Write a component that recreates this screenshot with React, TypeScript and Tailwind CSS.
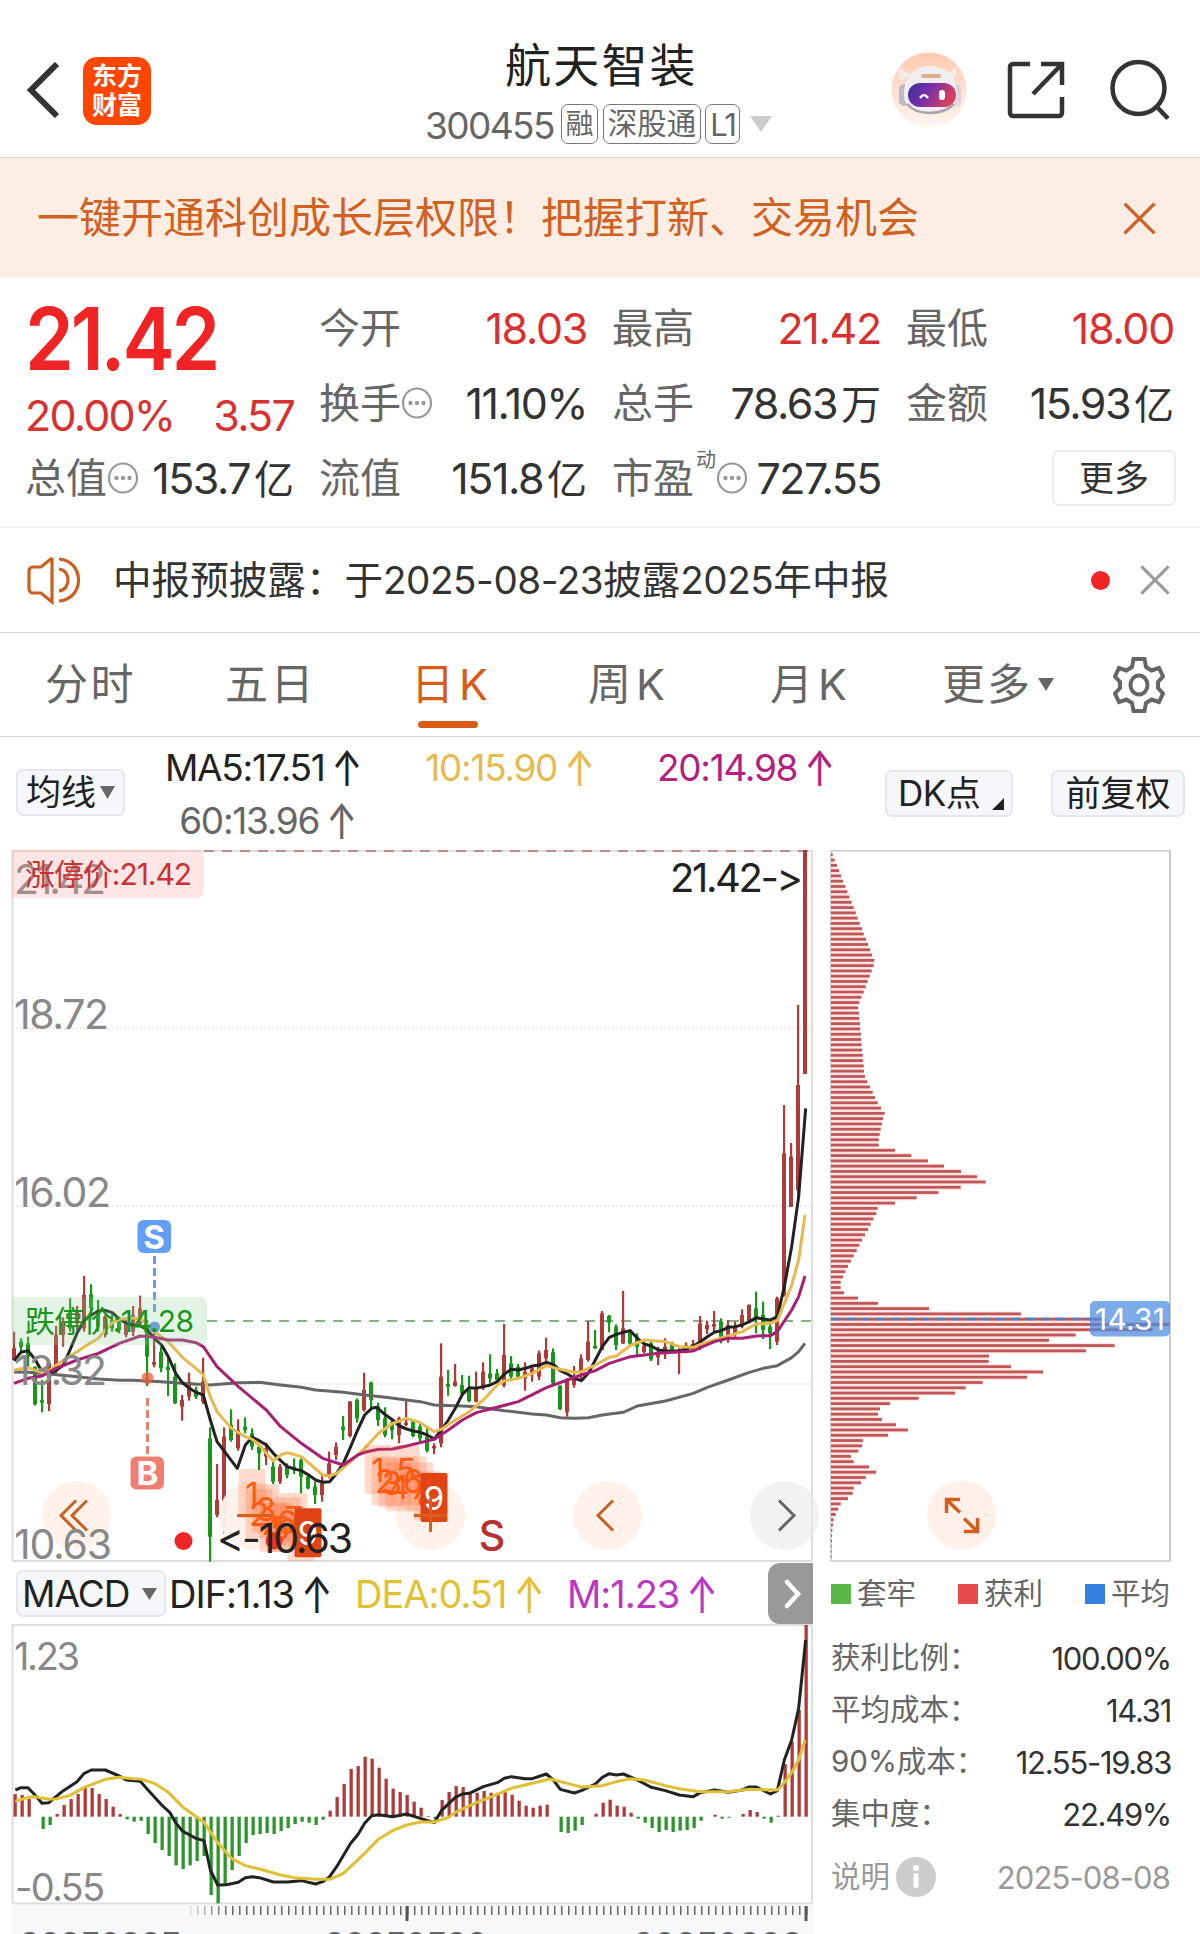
import { ReactNode } from 'react'

// [high, low, bodyTop, bodyBottom, up] in chart units (3 units = 1px)
type Candle = [number, number, number, number, 0 | 1]

const candles: Candle[] = [
  [395, 480, 445, 480, 1], [415, 455, 425, 440, 0], [410, 500, 430, 470, 0], [500, 617, 500, 612, 0],
  [540, 637, 600, 608, 0], [487, 633, 490, 612, 1], [378, 520, 405, 510, 1], [352, 440, 365, 405, 1],
  [295, 395, 330, 385, 0], [318, 400, 330, 370, 1], [228, 395, 285, 385, 1], [253, 345, 283, 325, 0],
  [300, 395, 330, 380, 0], [345, 412, 350, 395, 1], [340, 395, 360, 385, 0], [350, 400, 365, 390, 0],
  [360, 412, 370, 405, 1], [318, 408, 345, 395, 1], [287, 380, 325, 370, 1], [360, 558, 385, 470, 0],
  [400, 502, 486, 494, 1], [440, 517, 455, 505, 0], [470, 588, 500, 510, 0], [490, 612, 530, 610, 0],
  [585, 662, 600, 620, 1], [518, 602, 545, 590, 1], [560, 597, 570, 590, 0], [473, 612, 545, 605, 1],
  [682, 1085, 715, 1010, 0], [792, 952, 900, 945, 1], [682, 1000, 710, 925, 1], [628, 725, 675, 720, 0],
  [658, 752, 690, 745, 1], [652, 700, 680, 690, 0], [685, 750, 700, 740, 0], [730, 810, 740, 760, 0],
  [728, 795, 745, 770, 1], [780, 852, 800, 845, 0], [792, 852, 800, 845, 1], [790, 835, 800, 825, 0],
  [775, 822, 800, 808, 0], [775, 880, 780, 830, 0], [820, 868, 830, 865, 0], [845, 912, 860, 885, 0],
  [820, 905, 850, 885, 1], [755, 835, 790, 830, 1], [727, 780, 740, 765, 1], [648, 720, 680, 690, 0],
  [603, 712, 605, 708, 1], [595, 668, 600, 655, 0], [518, 635, 570, 630, 1], [545, 625, 548, 600, 0],
  [608, 678, 620, 660, 0], [622, 712, 655, 705, 0], [655, 718, 665, 690, 0], [650, 730, 655, 705, 1],
  [600, 678, 668, 675, 1], [660, 712, 665, 708, 0], [668, 730, 680, 715, 0], [680, 757, 710, 752, 0],
  [730, 762, 738, 745, 1], [430, 742, 530, 730, 1], [510, 587, 552, 560, 0], [492, 560, 545, 558, 1],
  [525, 590, 555, 580, 0], [527, 607, 570, 603, 0], [515, 607, 565, 605, 1], [487, 570, 515, 565, 1],
  [463, 550, 520, 535, 0], [507, 545, 520, 540, 0], [372, 562, 465, 555, 1], [468, 540, 490, 530, 0],
  [492, 535, 500, 530, 0], [487, 572, 515, 535, 1], [497, 545, 505, 520, 1], [452, 540, 460, 530, 1],
  [413, 495, 450, 475, 1], [445, 552, 457, 550, 0], [555, 630, 557, 627, 0], [535, 650, 540, 637, 1],
  [498, 563, 530, 555, 1], [463, 540, 475, 515, 1], [363, 485, 425, 480, 1], [390, 447, 438, 445, 0],
  [333, 450, 340, 450, 1], [345, 397, 348, 368, 0], [373, 450, 380, 435, 0], [273, 432, 385, 430, 1],
  [388, 435, 395, 430, 0], [400, 465, 410, 440, 0], [435, 460, 438, 456, 1], [425, 483, 430, 478, 0],
  [440, 495, 455, 472, 1], [415, 477, 440, 460, 1], [425, 450, 435, 448, 0], [445, 522, 450, 458, 1],
  [427, 460, 435, 455, 1], [420, 455, 432, 450, 1], [348, 450, 370, 445, 1], [362, 402, 375, 388, 1],
  [333, 395, 372, 380, 1], [355, 430, 365, 410, 0], [360, 428, 375, 410, 1], [365, 410, 380, 405, 1],
  [328, 385, 345, 380, 1], [313, 370, 315, 360, 1], [275, 400, 325, 355, 0], [305, 417, 345, 390, 0],
  [370, 447, 380, 400, 0], [290, 435, 295, 425, 1], [-285, 290, -140, 285, 1], [-171, 21, -130, 21, 1],
  [-585, 0, -345, -30, 1], [-1050, -378, -1050, -378, 1],
]

const ma5 =
  '42,482 63,457 84,452 105,478 126,515 147,520 168,512 190,495 210,450 231,400 253,360 274,345 295,333 316,331 337,338 358,357 379,370 400,375 421,377 442,390 463,415 485,435 505,470 527,520 547,548 568,565 588,577 610,585 631,660 651,725 674,755 694,782 712,805 736,735 757,712 778,722 799,735 820,760 842,782 862,800 883,807 904,812 926,825 947,840 968,847 989,845 1010,820 1030,790 1052,740 1073,690 1094,645 1115,625 1130,622 1157,645 1178,660 1199,678 1220,687 1240,693 1261,697 1282,705 1303,717 1324,690 1345,660 1366,625 1387,583 1408,563 1429,565 1450,560 1471,555 1492,545 1513,522 1534,508 1555,510 1576,505 1597,498 1618,495 1639,487 1660,493 1681,512 1702,522 1723,535 1744,542 1765,520 1786,480 1807,440 1828,412 1849,403 1870,397 1891,392 1912,415 1933,432 1954,438 1975,450 1996,452 2017,453 2038,452 2059,447 2080,438 2101,425 2122,410 2143,397 2164,392 2185,382 2206,380 2227,375 2248,365 2269,353 2290,357 2311,360 2332,350 2353,260 2375,140 2396,-10 2417,-275'
const ma10 =
  '42,510 84,503 126,518 147,512 190,480 231,455 253,440 295,415 316,390 337,368 358,358 400,354 421,357 442,372 463,395 505,425 547,472 588,505 610,525 631,590 651,635 694,685 736,710 757,718 778,735 799,760 820,783 842,765 862,758 904,770 947,807 968,825 989,828 1010,820 1052,785 1094,745 1136,700 1178,670 1220,655 1261,668 1303,695 1324,688 1366,660 1408,635 1450,600 1492,555 1513,543 1555,535 1597,520 1639,497 1681,508 1723,517 1744,515 1786,495 1828,472 1849,468 1891,437 1933,420 1996,425 2038,440 2080,442 2101,433 2143,420 2185,408 2227,395 2269,372 2311,370 2332,362 2353,310 2375,255 2396,180 2415,45'
const ma20 =
  '42,550 84,535 126,528 168,505 231,480 295,460 358,430 421,408 463,412 505,420 547,420 588,428 610,440 651,500 715,560 799,630 842,680 904,730 968,775 1030,795 1073,765 1094,757 1136,748 1178,747 1220,738 1261,728 1303,718 1345,690 1387,660 1429,638 1471,627 1555,605 1639,563 1702,540 1744,525 1786,512 1828,490 1891,470 1975,460 2080,453 2101,443 2143,425 2185,415 2227,415 2269,408 2311,407 2332,395 2375,330 2396,290 2415,228'
const ma60 =
  '42,516 84,517 147,522 210,528 295,537 358,541 400,541 485,545 547,550 631,555 715,548 778,547 842,555 904,562 947,570 1030,577 1094,585 1157,592 1220,600 1261,605 1303,615 1387,618 1429,620 1513,632 1597,642 1639,645 1681,653 1723,655 1765,653 1807,645 1870,637 1912,618 1996,603 2080,580 2122,562 2185,540 2248,517 2290,505 2332,497 2375,473 2396,455 2415,430'

const macdBars = [
  68, 65, 53, 0, -37, -25, 8, 35, 53, 68, 88, 86, 68, 53, 30, 8, -8, -15, -12, -52, -79, -100, -118, -146, -157, -146,
  -133, -118, -235, -260, -203, -160, -118, -79, -55, -52, -49, -52, -43, -34, -22, -15, -18, -25, -9, 18, 59, 98, 143,
  152, 180, 174, 147, 114, 84, 74, 65, 45, 27, 2, -6, 50, 74, 92, 89, 72, 72, 77, 72, 72, 75, 66, 48, 33, 27, 33, 36, 0,
  -46, -49, -42, -25, 0, 9, 42, 51, 33, 30, 12, -6, -18, -34, -46, -40, -46, -42, -40, -34, -12, 0, 6, -6, -3, 0, 8, 20,
  14, -6, -18, 3, 158, 225, 320, 575,
]
const dif =
  '46,540 63,533 84,533 105,555 126,580 147,578 168,560 190,542 231,515 253,490 274,480 316,480 358,498 379,510 421,514 442,538 485,585 510,608 527,638 547,663 588,685 612,692 631,780 653,825 680,824 715,817 736,803 757,800 778,803 820,816 862,816 904,812 947,822 968,815 989,800 1010,770 1052,700 1073,675 1094,640 1115,617 1136,614 1178,620 1220,612 1261,625 1303,638 1324,602 1366,562 1387,552 1408,550 1450,530 1492,518 1513,505 1534,500 1576,506 1597,506 1639,492 1660,510 1681,538 1723,549 1744,542 1786,522 1807,502 1828,491 1849,495 1870,492 1912,510 1954,532 1996,542 2038,555 2080,560 2101,548 2143,540 2185,547 2227,540 2248,531 2269,531 2311,552 2332,542 2353,450 2375,390 2396,295 2417,90'
const dea =
  '46,574 84,562 105,560 147,568 168,567 210,556 253,532 316,508 358,502 400,506 421,507 463,520 505,547 547,590 612,637 651,695 694,745 736,767 778,777 842,795 883,803 947,808 989,808 1030,790 1094,730 1136,687 1178,662 1220,645 1261,636 1303,636 1345,623 1366,607 1429,578 1492,553 1534,535 1597,520 1650,507 1702,520 1744,531 1807,527 1849,515 1891,506 1933,510 1996,527 2038,536 2101,545 2185,545 2248,538 2332,540 2353,518 2375,488 2396,450 2415,390'

const chips = [
  5, 11, 18, 24, 30, 36, 43, 49, 55, 62, 68, 74, 80, 86, 93, 98, 105, 111, 117, 123, 130, 128, 122, 116, 110, 104, 98, 91,
  85, 81, 84, 85, 87, 88, 90, 91, 92, 93, 95, 96, 98, 99, 102, 109, 117, 125, 132, 140, 150, 161, 156, 153, 149, 146, 143,
  143, 192, 241, 291, 339, 390, 438, 464, 389, 322, 257, 192, 140, 136, 127, 119, 111, 102, 93, 85, 77, 68, 60, 51, 43,
  36, 29, 29, 39, 81, 141, 294, 570, 824, 1017, 965, 734, 654, 851, 765, 474, 473, 540, 636, 588, 455, 404, 372, 263, 177,
  147, 141, 153, 195, 231, 171, 96, 93, 82, 60, 68, 114, 135, 104, 90, 68, 65, 51, 29, 21, 14, 8, 6, 4, 3, 3, 2, 2, 2,
]

const RED = '#b03a38'
const GREEN = '#179617'

// nine-turn marks hang below a run of nine candles
const turns = [34, 52].flatMap((start) =>
  Array.from({ length: 9 }, (_, i) => ({ n: i + 1, x: 14 + 7 * (start + i), y: candles[start + i][1] / 3 + 368 })),
)

function More() {
  return (
    <svg width="32" height="34" viewBox="0 0 32 34" className="shrink-0">
      <ellipse cx="16" cy="16" rx="14" ry="14.500" fill="none" stroke="#999" strokeWidth="2.200" />
      <circle cx="9.500" cy="16" r="2.200" fill="#999" />
      <circle cx="16" cy="16" r="2.200" fill="#999" />
      <circle cx="22.500" cy="16" r="2.200" fill="#999" />
    </svg>
  )
}

function Down({ w, h, color }: { w: number; h: number; color: string }) {
  return (
    <svg width={w} height={h} viewBox="0 0 10 10" preserveAspectRatio="none" className="shrink-0">
      <path d="M0 0h10L5 10z" fill={color} />
    </svg>
  )
}

function Up() {
  return <span className="ml-[7px] inline-block scale-y-[1.35] tracking-normal">↑</span>
}

function Cross({ size, color }: { size: number; color: string }) {
  return (
    <svg width={size} height={size} viewBox="0 0 32 32">
      <path d="M1.5 1.5l29 29M30.5 1.5l-29 29" stroke={color} strokeWidth="3.2" />
    </svg>
  )
}

function Header() {
  return (
    <header className="flex h-[158px] items-start border-b border-[#d5d5d5] pl-[27px]">
      <svg width="33" height="56" viewBox="0 0 33 56" className="mt-[62px]">
        <path d="M30 2L4 28l26 26" fill="none" stroke="#333" strokeWidth="6" />
      </svg>
      <div className="mt-[57px] ml-[23px] flex h-[68px] w-[68px] flex-col items-center justify-center rounded-[14px] bg-[#ff4600] text-[25px] leading-[29px] font-bold text-white">
        <span>东方</span>
        <span>财富</span>
      </div>
      <div className="ml-[274px] flex w-[348px] flex-col">
        <h1 className="mt-[35px] ml-[80px] text-[46px] leading-[60px] tracking-[2.2px] text-[#222]">航天智装</h1>
        <div className="mt-[9px] flex h-[40px] items-center text-[#666]">
          <span className="mt-[2px] w-[136px] text-[37px] tracking-[-1.6px]">300455</span>
          <span className="flex h-[40px] w-[37px] items-center justify-center rounded-[7px] border border-[#777] text-[28px]">
            融
          </span>
          <span className="ml-[5px] flex h-[40px] w-[98px] items-center justify-center rounded-[7px] border border-[#777] text-[29.5px]">
            深股通
          </span>
          <span className="mr-[10px] ml-[4px] flex h-[40px] w-[35px] items-center justify-center rounded-[7px] border border-[#777] text-[31px] tracking-[-2px]">
            L1
          </span>
          <Down w={22} h={16} color="#ccc" />
        </div>
      </div>
      <svg width="76" height="76" viewBox="0 0 76 76" className="mt-[52px] ml-[118px]">
        <defs>
          <linearGradient id="halo" x1="0" y1="0" x2="0" y2="1">
            <stop offset="0" stopColor="#ffc9ad" />
            <stop offset="1" stopColor="#fff6f2" />
          </linearGradient>
          <linearGradient id="visor" x1="0" y1="0" x2="1" y2="0.3">
            <stop offset="0" stopColor="#3a2f9c" />
            <stop offset="0.5" stopColor="#7a2fa8" />
            <stop offset="1" stopColor="#d8405c" />
          </linearGradient>
        </defs>
        <circle cx="38" cy="38" r="37.5" fill="url(#halo)" />
        <path d="M10 29q-5-7 0-14 3 6 10 7zM62 27q6-5 2-12-3 6-10 7z" fill="#f3ecec" />
        <rect x="8" y="32" width="10" height="22" rx="5" fill="#c0bac6" />
        <rect x="60" y="32" width="10" height="22" rx="5" fill="#dcd2d8" />
        <path d="M13 42c0-17 9-28 26-28s27 11 27 28c0 13-10 19-27 19S13 55 13 42z" fill="#f1eef2" />
        <path d="M16 52c6 7 15 9 23 9s17-2 24-9" fill="none" stroke="#a9a3b2" strokeWidth="2.500" />
        <rect x="30" y="22" width="20" height="4" rx="2" fill="#d9b08a" />
        <rect x="17" y="31" width="48" height="24" rx="12" fill="url(#visor)" />
        <path d="M29 46q4-6 8 0" fill="none" stroke="#fff" strokeWidth="2.4" />
        <rect x="48" y="38" width="6" height="10" rx="3" fill="#fff" />
      </svg>
      <svg width="60" height="60" viewBox="0 0 60 60" fill="none" stroke="#333" strokeWidth="4.5" className="mt-[60px] ml-[39px]">
        <path d="M24 4H7a3 3 0 0 0-3 3v46a3 3 0 0 0 3 3h46a3 3 0 0 0 3-3V37M35 4h21v21M56 4L27 34" />
      </svg>
      <svg width="62" height="62" viewBox="0 0 62 62" fill="none" stroke="#333" strokeWidth="4.5" className="mt-[59px] ml-[43px]">
        <circle cx="29.5" cy="29" r="26" />
        <path d="M47 47l12 12.500" />
      </svg>
    </header>
  )
}

function Stat({ label, value, red, extra }: { label: string; value: ReactNode; red?: boolean; extra?: ReactNode }) {
  return (
    <div className="flex h-[75px] items-center justify-between">
      <span className="flex items-center text-[41px] whitespace-nowrap text-[#666]">
        {label}
        {extra}
      </span>
      <span
        className={
          red
            ? 'text-[43px] tracking-[-1.3px] whitespace-nowrap text-[#d93030]'
            : 'text-[43px] tracking-[-1.5px] whitespace-nowrap text-[#333]'
        }
      >
        {value}
      </span>
    </div>
  )
}

function Unit({ children }: { children: ReactNode }) {
  return <span className="ml-[4px] text-[40px] tracking-normal">{children}</span>
}

function Quote() {
  return (
    <section className="grid h-[250px] grid-cols-[269px_268px_269px_268px] gap-x-[25px] border-b border-[#ececec] pt-[13px] pl-[25px]">
      <div>
        <div className="h-[96px] origin-left scale-x-[0.9] text-[87px] leading-[96px] font-semibold tracking-[-3.5px] text-[#f02424]">
          21.42
        </div>
        <div className="flex h-[54px] items-center justify-between pt-[2px] text-[43px] tracking-[-1.8px] text-[#d93030]">
          <span>20.00%</span>
          <span>3.57</span>
        </div>
        <Stat label="总值" extra={<More />} value={<>153.7<Unit>亿</Unit></>} />
      </div>
      <div>
        <Stat label="今开" value="18.03" red />
        <Stat label="换手" extra={<More />} value="11.10%" />
        <Stat label="流值" value={<>151.8<Unit>亿</Unit></>} />
      </div>
      <div>
        <Stat label="最高" value="21.42" red />
        <Stat label="总手" value={<>78.63<Unit>万</Unit></>} />
        <Stat
          label="市盈"
          extra={
            <>
              <span className="-mt-[38px] ml-[2px] text-[20px]">动</span>
              <More />
            </>
          }
          value="727.55"
        />
      </div>
      <div>
        <Stat label="最低" value="18.00" red />
        <Stat label="金额" value={<>15.93<Unit>亿</Unit></>} />
        <div className="-mr-[2px] flex h-[73px] items-center justify-end">
          <button className="h-[56px] w-[124px] rounded-[7px] border-2 border-[#ebebeb] text-[35px] leading-[50px] text-[#333]">
            更多
          </button>
        </div>
      </div>
    </section>
  )
}

function Notice() {
  return (
    <section className="flex h-[105px] items-center border-b border-[#d9d9d9] pr-[30px] pl-[27px]">
      <svg width="53" height="50" viewBox="0 0 53 50" fill="none" stroke="#cc6020" strokeWidth="3.2">
        <path d="M25 3v44l-11-9H6a4 4 0 0 1-4-4V16a4 4 0 0 1 4-4h8L25 3M32 4c26 2 26 40 0 42M32 14c12 1 12 21 0 22" />
      </svg>
      <p className="ml-[33px] text-[38.600px] whitespace-nowrap text-[#333]">
        中报预披露：于<span className="tracking-[-0.450px]">2025-08-23</span>披露
        <span className="tracking-[-0.450px]">2025</span>年中报
      </p>
      <span className="mr-[30px] ml-auto h-[19px] w-[19px] rounded-full bg-[#f02424]" />
      <Cross size={30} color="#999" />
    </section>
  )
}

function Tabs() {
  return (
    <nav className="flex h-[104px] items-center border-b border-[#d5d5d5] pl-[45px] text-[43px] whitespace-nowrap text-[#666]">
      <span className="w-[180px] tracking-[2.500px]">分时</span>
      <span className="w-[186px] tracking-[2.500px]">五日</span>
      <span className="relative w-[177px] text-[#d85c16]">
        日<span className="ml-[5px]">K</span>
        <i className="absolute top-[58px] left-[7px] h-[7px] w-[60px] rounded-full bg-[#d85c16]" />
      </span>
      <span className="w-[182px]">
        周<span className="ml-[5px]">K</span>
      </span>
      <span className="w-[172px]">
        月<span className="ml-[5px]">K</span>
      </span>
      <span className="flex w-[171px] items-center gap-[6px] tracking-[2px]">
        更多
        <Down w={16} h={13} color="#666" />
      </span>
      <svg width="52" height="58" viewBox="0 0 52 58" fill="none" stroke="#666" strokeWidth="4">
        <path d="M20.500 3h11l1.500 8 5.500 3.500 7.500-2.500 4 8.500-5 5.500v6l5 5.500-4 8.500-7.500-2.500L33 47l-1.500 8h-11L19 47l-5.500-3.500L6 46l-4-8.500L7 32v-6l-5-5.500L6 12l7.500 2.500L19 11z" />
        <ellipse cx="26" cy="29" rx="8.500" ry="9.500" />
      </svg>
    </nav>
  )
}

function Averages() {
  return (
    <section className="flex h-[113px] items-start pl-[16px] whitespace-nowrap text-[#222]">
      <button className="mt-[32px] flex h-[47px] w-[109px] items-center gap-[4px] rounded-[7px] border-2 border-[#e4e7eb] bg-[#f6f7fa] pl-[8px] text-[35px]">
        均线
        <Down w={15} h={13} color="#666" />
      </button>
      <div className="ml-[40px] grid w-[720px] grid-cols-[192px_238px_240px] pt-[4px] text-right text-[37px] leading-[53px] tracking-[-1.300px]">
        <span>MA5:17.51<Up /></span>
        <span className="text-[#e8b94e]">10:15.90<Up /></span>
        <span className="text-[#b5207e]">20:14.98<Up /></span>
        <span className="text-[#666]">60:13.96<Up /></span>
      </div>
      <button className="mt-[33px] flex h-[47px] w-[128px] items-end rounded-[7px] border-2 border-[#e4e7eb] bg-[#f6f7fa] pl-[11px] text-[35px] leading-[43px]">
        <span className="tracking-[-0.500px]">DK点</span>
        <svg width="12" height="12" className="mb-[5px] ml-[12px]">
          <path d="M12 0v12H0z" fill="#222" />
        </svg>
      </button>
      <button className="mt-[33px] ml-[38px] h-[47px] w-[134px] rounded-[7px] border-2 border-[#e4e7eb] bg-[#f6f7fa] text-[35px] leading-[43px]">
        前复权
      </button>
    </section>
  )
}

function KChart() {
  return (
    <div className="relative h-[713px] w-[813px]">
      <svg width="820" height="713" viewBox="0 0 820 713" className="absolute top-0 left-0">
        <path d="M12.500 0v711M812 0v711M12 711h800" stroke="#ddd" strokeWidth="2" fill="none" />
        <path d="M12 .8h800" stroke="#ddd" strokeWidth="2" />
        <path d="M12 178.500h800M12 356h800M12 534h800" stroke="#e2e2e2" strokeWidth="1.500" strokeDasharray="2 2" />
        <path d="M204 1h608" stroke="#b87070" strokeWidth="1.500" strokeDasharray="10 8" />
        <path d="M207 471h605" stroke="#7fb77f" strokeWidth="2" strokeDasharray="10 8" />

        {candles.map(([high, low, top, bottom, up], i) => (
          <g key={i} fill={up ? RED : GREEN}>
            <rect x={13 + 7 * i} y={high / 3 + 350} width="2.200" height={(low - high) / 3} />
            <rect x={12 + 7 * i} y={top / 3 + 350} width="4" height={(bottom - top) / 3} />
          </g>
        ))}

        <g transform="translate(0 350) scale(.33333)" fill="none" strokeWidth="9" strokeLinejoin="round">
          <polyline points={ma60} stroke="#666" />
          <polyline points={ma5} stroke="#222" />
          <polyline points={ma10} stroke="#e8b94e" />
          <polyline points={ma20} stroke="#a81f74" />
        </g>

        <path d="M154.500 406v58" stroke="#6a9cdc" strokeWidth="3" strokeDasharray="8 4" />
        <circle cx="154.500" cy="477" r="5.500" fill="#3f80d8" fillOpacity=".85" />
        <rect x="137.500" y="370" width="33.500" height="33" rx="6" fill="#619ff5" />
        <path d="M147.500 548v56" stroke="#e08272" strokeWidth="3" strokeDasharray="8 4" />
        <circle cx="147.500" cy="528" r="6" fill="#f05a3c" fillOpacity=".75" />
        <rect x="130.500" y="606.500" width="33.500" height="33" rx="6" fill="#f07f70" />
        <g fill="#fff" fontSize="33" fontWeight="700" textAnchor="middle">
          <text x="154" y="398.500">S</text>
          <text x="147.500" y="635">B</text>
        </g>

        <g fontSize="41" fill="#888">
          <text x="14" y="43.500" textLength="92">21.42</text>
          <text x="14" y="179" textLength="95">18.72</text>
          <text x="14" y="357" textLength="97">16.02</text>
          <text x="14" y="535" textLength="93">13.32</text>
        </g>
        <path d="M12 0h185a7 7 0 0 1 7 7v34a7 7 0 0 1-7 7H12z" fill="#ff9c9c" fillOpacity=".25" />
        <text x="25" y="35" fontSize="30" fill="#cc3030" textLength="167">
          涨停价:21.42
        </text>
        <path d="M12 447h188a7 7 0 0 1 7 7v34a7 7 0 0 1-7 7H12z" fill="#8fd49a" fillOpacity=".25" />
        <text x="25" y="482" fontSize="30" fill="#179617" textLength="169">
          跌停价:14.28
        </text>
        <text x="670" y="41.500" fontSize="40" fill="#222" textLength="133">
          21.42-&gt;
        </text>
      </svg>

      <svg width="830" height="713" viewBox="0 0 830 713" className="absolute top-0 left-0" fill="none">
        {[76.500, 253.500, 430.500, 607.500].map((cx) => (
          <circle key={cx} cx={cx} cy="665.500" r="34.500" fill="#fff1ea" fillOpacity=".95" />
        ))}
        <circle cx="784.500" cy="665.500" r="34.500" fill="#e8e8e8" fillOpacity=".55" />
        <g stroke="#cc6020" strokeWidth="3">
          <path d="M76 650.500L61 665.500l15 15M87 650.500L72 665.500l15 15" />
          <path d="M613 650.500l-15 15 15 15" />
        </g>
        <path d="M779 650.500l15 15-15 15" stroke="#666" strokeWidth="3" />
        <text x="14" y="708.500" fontSize="41" fill="#888" textLength="98">
          10.63
        </text>
        {turns.map(({ n, x, y }) => (
          <g key={`${n}-${x}`}>
            <rect x={x - 13.500} y={y + 1} width="27" height="49" rx="2" fill={n === 9 ? '#e04414' : '#ff5a20'} fillOpacity={n === 9 ? 1 : 0.22} />
            <text x={x} y={y + 38} fontSize="33" textAnchor="middle" fill={n === 9 ? '#fff' : '#ff5a0a'}>
              {n}
            </text>
          </g>
        ))}
        <path d="M237 665.500h34M414 665.500h33M430.500 648v34" stroke="#d8601a" strokeWidth="3" />
        <circle cx="274" cy="691" r="8.500" fill="#f03020" />
        <circle cx="183.500" cy="691" r="9" fill="#f02424" />
        <text x="217" y="702.500" fontSize="41" fill="#222" textLength="136">
          &lt;-10.63
        </text>
        <text x="492" y="699.500" fontSize="41" fontWeight="500" fill="#b83030" textAnchor="middle">
          S
        </text>
      </svg>
    </div>
  )
}

function MacdBar() {
  return (
    <div className="flex h-[61px] items-center pl-[16px] text-[38px] tracking-[-1px] whitespace-nowrap text-[#222]">
      <button className="flex h-[47px] w-[150px] items-center justify-between rounded-[7px] border-2 border-[#e4e7eb] bg-[#f6f7fa] pr-[7px] pl-[4px] text-[37px]">
        MACD
        <Down w={15} h={12} color="#666" />
      </button>
      <span className="ml-[3px] w-[186px]">DIF:1.13<Up /></span>
      <span className="w-[212px] text-[#e3c030]">DEA:0.51<Up /></span>
      <span className="w-[201px] text-[#bd36c4]">M:1.23<Up /></span>
      <span className="flex h-[61px] w-[45px] items-center justify-center rounded-l-[12px] bg-[#999]">
        <svg width="18" height="30" viewBox="0 0 18 30" className="ml-[4px]">
          <path d="M3 3l11 12L3 27" fill="none" stroke="#fff" strokeWidth="4.500" strokeLinecap="round" />
        </svg>
      </span>
    </div>
  )
}

function MacdChart() {
  return (
    <svg width="820" height="281" viewBox="0 0 820 281" className="block">
      <path d="M12.500 1v278M812 1v278M12 1h800M12 279.500h800" stroke="#ddd" strokeWidth="2" />
      <g fontSize="38" fill="#888">
        <text x="14" y="45.500" textLength="66">1.23</text>
        <text x="15" y="276.500" textLength="90">-0.55</text>
      </g>
      {macdBars.map((v, i) => (
        <rect
          key={i}
          x={13.500 + 7 * i}
          y={v > 0 ? 192.700 - v / 3 : 192.700}
          width="3.300"
          height={Math.abs(v) / 3}
          fill={v > 0 ? RED : '#2c962c'}
        />
      ))}
      <g transform="translate(0 -14) scale(.33333)" fill="none" strokeWidth="9" strokeLinejoin="round">
        <polyline points={dif} stroke="#222" />
        <polyline points={dea} stroke="#e0bf35" />
      </g>
    </svg>
  )
}

function Ruler() {
  return (
    <svg width="820" height="29" viewBox="0 0 820 29" className="block">
      <rect x="12" width="801" height="29" fill="#f7f8fa" />
      {Array.from({ length: 89 }, (_, i) => (
        <rect key={i} x={190 + 7 * i} y="1" width="1.500" height="9" fill="#666" fillOpacity={Math.min(1, 0.2 + i * 0.15)} />
      ))}
      <path d="M407 1v15M806 1v15" stroke="#555" strokeWidth="3" />
      <g fontSize="38" fill="#666">
        <text x="18" y="54.500" textLength="164">20250225</text>
        <text x="323" y="54.500" textLength="166">20250520</text>
        <text x="632" y="54.500" textLength="172">20250808</text>
      </g>
    </svg>
  )
}

function ChipChart() {
  return (
    <svg width="342" height="713" viewBox="0 0 342 713" className="block">
      <path d="M1 .8h340M1 711h340" stroke="#ccc" strokeWidth="1.500" />
      <path d="M1 0v711M340 0v711" stroke="#ccc" strokeWidth="2" />
      {chips.map((w, i) => (
        <g key={i}>
          <rect x="1" y={2.200 + 5.277 * i} width={w / 3} height="5.277" fill="#ffe4e4" />
          <rect x="1" y={3.400 + 5.277 * i} width={w / 3} height="2.800" fill="#c25656" />
        </g>
      ))}
      <path d="M1 469h260" stroke="#4a7fc8" strokeWidth="2.500" strokeDasharray="9 6" />
      <rect x="260" y="451" width="80" height="35.500" rx="5" fill="#4a8ae0" fillOpacity=".72" />
      <text x="265" y="479.500" fontSize="30" fill="#fff" textLength="70">
        14.31
      </text>
      <circle cx="131.500" cy="665" r="34.500" fill="#fff1ea" />
      <path d="M130 649.500h-13.500v13.500M117 650l13 12.500M134 681.500h13.500V668M147 681l-13-12.500" stroke="#d2601c" strokeWidth="3.500" fill="none" />
    </svg>
  )
}

const costs = [
  ['获利比例：', '100.00%'],
  ['平均成本：', '14.31'],
  ['90%成本：', '12.55-19.83'],
  ['集中度：', '22.49%'],
]

function ChipInfo() {
  return (
    <div className="flex w-[340px] flex-col pl-px text-[29.500px] whitespace-nowrap text-[#666]">
      <div className="flex h-[61px] items-center justify-between">
        <span className="flex items-center gap-[6px]">
          <i className="h-[20px] w-[20px] bg-[#5cb846]" />
          套牢
        </span>
        <span className="flex items-center gap-[6px]">
          <i className="h-[20px] w-[20px] bg-[#e64a4a]" />
          获利
        </span>
        <span className="flex items-center gap-[6px]">
          <i className="h-[20px] w-[20px] bg-[#3580e0]" />
          平均
        </span>
      </div>
      <div className="mt-[8px]">
        {costs.map(([label, value]) => (
          <div key={label} className="flex h-[52px] items-center justify-between">
            <span>{label}</span>
            <span className="-mr-px text-[31px] tracking-[-1.300px] text-[#333]">{value}</span>
          </div>
        ))}
      </div>
      <div className="mt-[11px] flex h-[52px] items-center text-[#999]">
        说明
        <span className="ml-[6px] flex h-[40px] w-[40px] items-center justify-center rounded-full bg-[#ccc]">
          <svg width="6" height="24" viewBox="0 0 6 24" fill="#fff">
            <circle cx="3" cy="3" r="3" />
            <rect x=".5" y="8" width="5" height="15" rx="2.500" />
          </svg>
        </span>
        <span className="ml-auto text-[31px] tracking-[-0.900px]">2025-08-08</span>
      </div>
    </div>
  )
}

export default function App() {
  return (
    <main className="h-[1934px] w-[1200px] overflow-hidden bg-white font-['Inter','Noto_Sans_CJK_SC',sans-serif] leading-none [font-feature-settings:'calt'_0]">
      <Header />
      <section className="flex h-[120px] items-center justify-between bg-[#fceee5] pr-[44px] pl-[37px] text-[42px] whitespace-nowrap text-[#d26020]">
        一键开通科创成长层权限！把握打新、交易机会
        <Cross size={33} color="#d26020" />
      </section>
      <Quote />
      <Notice />
      <Tabs />
      <Averages />
      <div className="flex">
        <div className="w-[830px]">
          <KChart />
          <MacdBar />
          <MacdChart />
          <Ruler />
        </div>
        <div>
          <ChipChart />
          <ChipInfo />
        </div>
      </div>
    </main>
  )
}
